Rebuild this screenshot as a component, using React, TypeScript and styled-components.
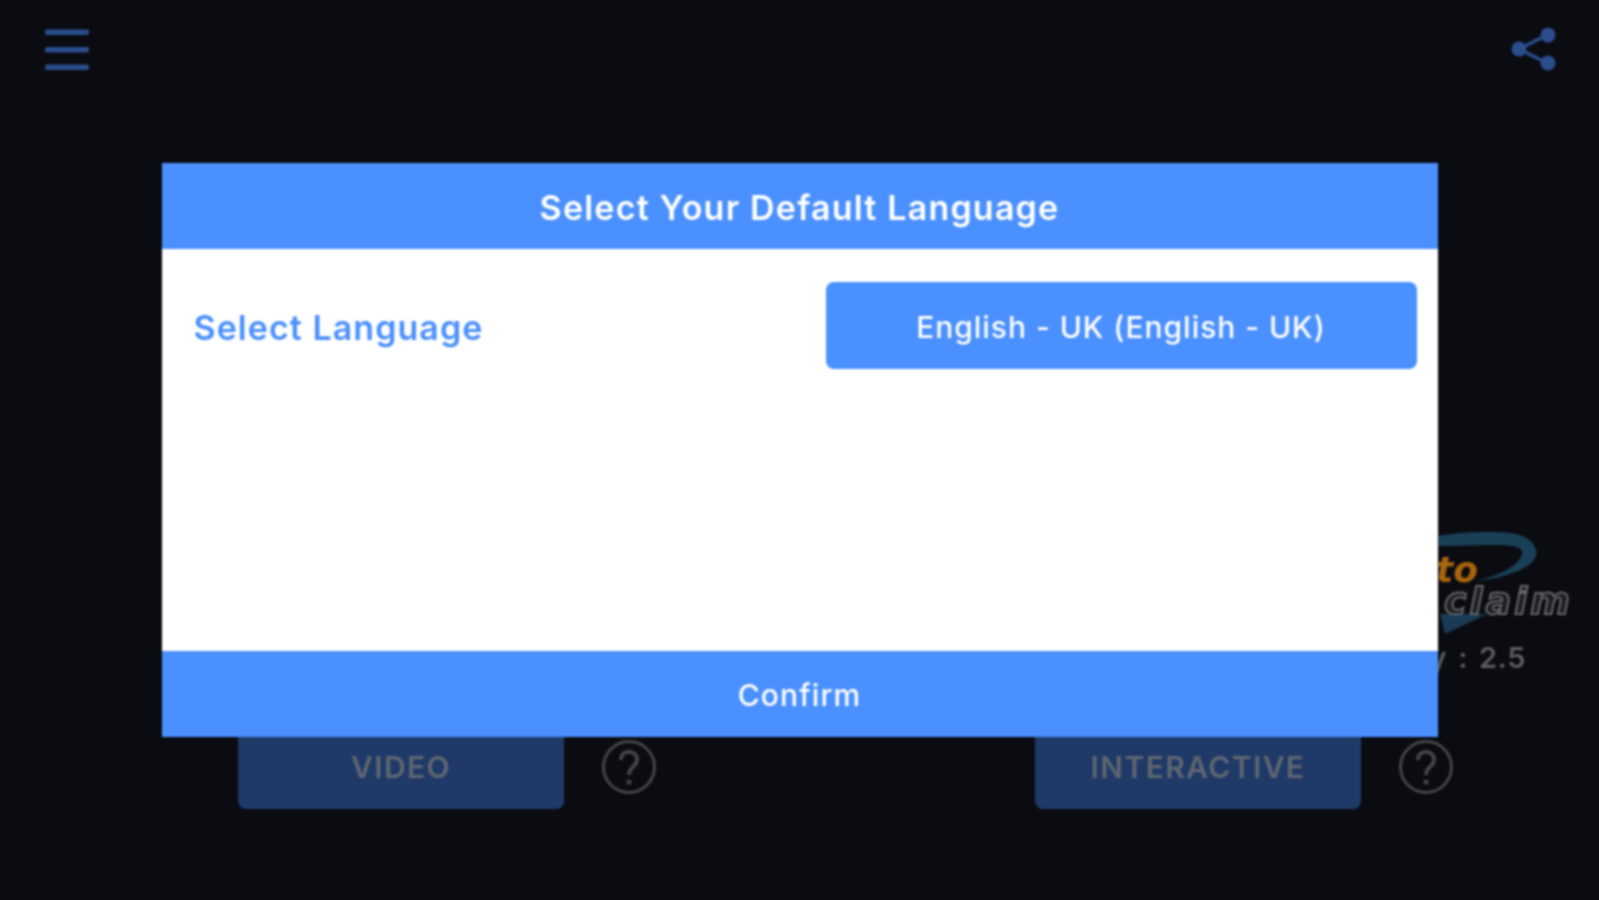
import React from 'react';
import styled, { createGlobalStyle } from 'styled-components';

const GlobalStyle = createGlobalStyle`
  html, body {
    margin: 0;
    padding: 0;
    background: #0a0c12;
    overflow: hidden;
  }
  * {
    box-sizing: border-box;
  }
`;

const App: React.FC = () => {
  return (
    <>
      <GlobalStyle />
      <Page>
        <TopBar>
          <svg width="44" height="46" viewBox="0 0 44 46">
            <rect x="0" y="1.5" width="44" height="5.5" rx="2" fill="#2a4d8c" />
            <rect x="0" y="19" width="44" height="5.5" rx="2" fill="#2a4d8c" />
            <rect x="0" y="36.5" width="44" height="5.5" rx="2" fill="#2a4d8c" />
          </svg>
          <svg width="46" height="46" viewBox="0 0 46 46">
            <path d="M9 21 L37 7 M9 21 L37 35" stroke="#2a4d8c" strokeWidth="3.5" />
            <circle cx="9" cy="21" r="7.5" fill="#2a4d8c" />
            <circle cx="38" cy="7" r="7.5" fill="#2a4d8c" />
            <circle cx="38" cy="35" r="7.5" fill="#2a4d8c" />
          </svg>
        </TopBar>
        <Content>
          <Logo>
            <svg width="170" height="115" viewBox="0 0 170 115">
              <path
                d="M8 10 C30 6 60 5 80 7 C100 9 110 22 105 32 C98 45 70 52 47 55 C65 50 88 42 92 28 C94 20 80 19 65 19 C45 19 25 20 8 20 Z"
                fill="#1a4058"
              />
              <path d="M10 88 L57 88 L15 108 Z" fill="#1a3a55" />
              <OrangeText x="6" y="56">to</OrangeText>
              <GreyText x="14" y="88">claim</GreyText>
            </svg>
          </Logo>
          <VersionText>y : 2.5</VersionText>
          <ModeRow>
            <ModeGroup>
              <ModeButton>VIDEO</ModeButton>
              <HelpIcon />
            </ModeGroup>
            <ModeGroup>
              <ModeButton>INTERACTIVE</ModeButton>
              <HelpIcon />
            </ModeGroup>
          </ModeRow>
        </Content>
      </Page>
      <Overlay>
        <Modal>
          <ModalHeader>Select Your Default Language</ModalHeader>
          <ModalBody>
            <Label>Select Language</Label>
            <LanguageButton>English - UK (English - UK)</LanguageButton>
          </ModalBody>
          <ModalFooter>Confirm</ModalFooter>
        </Modal>
      </Overlay>
    </>
  );
};

const HelpIcon: React.FC = () => (
  <svg width="56" height="56" viewBox="0 0 56 56">
    <circle cx="28" cy="28" r="25.5" fill="none" stroke="#454545" strokeWidth="3" />
    <path
      d="M20 21 C20 10 36 10 36 21 C36 28 28 27 28 36"
      fill="none"
      stroke="#454545"
      strokeWidth="4"
    />
    <circle cx="28" cy="43" r="2.6" fill="#454545" />
  </svg>
);

const Page = styled.div`
  display: flex;
  flex-direction: column;
  width: 1599px;
  height: 900px;
  background: #0a0c12;
  font-family: Inter, 'Liberation Sans', sans-serif;
  filter: blur(1px);
`;

const TopBar = styled.div`
  display: flex;
  justify-content: space-between;
  align-items: flex-start;
  padding: 28px 43px 0 45px;
  height: 98px;
`;

const Content = styled.div`
  flex: 1;
  display: flex;
  flex-direction: column;
  justify-content: flex-end;
  padding-bottom: 91px;
`;

const Logo = styled.div`
  align-self: flex-end;
  width: 169px;
  height: 115px;
  overflow: hidden;
`;

const OrangeText = styled.text`
  font-family: 'DejaVu Sans', sans-serif;
  font-size: 36px;
  font-weight: 700;
  font-style: italic;
  fill: #a8650e;
`;

const GreyText = styled.text`
  font-family: 'DejaVu Sans', sans-serif;
  font-size: 38px;
  font-weight: 700;
  font-style: italic;
  letter-spacing: 3px;
  fill: #1c1e23;
  stroke: #666666;
  stroke-width: 2px;
`;

const VersionText = styled.div`
  align-self: flex-end;
  margin: 0 73px 50px 0;
  font-size: 29px;
  line-height: 34px;
  font-weight: 600;
  letter-spacing: 0.6px;
  word-spacing: 3px;
  color: #5c5c5c;
`;

const ModeRow = styled.div`
  display: grid;
  grid-template-columns: 797px 1fr;
  padding-left: 238px;
`;

const ModeGroup = styled.div`
  display: flex;
  align-items: center;
  gap: 37px;
`;

const ModeButton = styled.div`
  display: flex;
  align-items: center;
  justify-content: center;
  width: 326px;
  height: 84px;
  border-radius: 8px;
  background: #1f3a68;
  color: #5f6670;
  font-size: 30px;
  font-weight: 600;
  letter-spacing: 1.4px;
`;

const Overlay = styled.div`
  position: fixed;
  inset: 0;
  display: flex;
  align-items: center;
  justify-content: center;
  font-family: Inter, 'Liberation Sans', sans-serif;
  filter: blur(1px);
`;

const Modal = styled.div`
  display: flex;
  flex-direction: column;
  width: 1276px;
  height: 574px;
  background: #ffffff;
`;

const ModalHeader = styled.div`
  display: flex;
  align-items: center;
  justify-content: center;
  height: 86px;
  padding-top: 3px;
  background: #4a90fe;
  color: #ffffff;
  font-size: 34px;
  font-weight: 600;
  letter-spacing: 1.2px;
`;

const ModalBody = styled.div`
  flex: 1;
  display: flex;
  align-items: flex-start;
  justify-content: space-between;
  padding: 33px 21px 0 32px;
`;

const Label = styled.div`
  height: 87px;
  line-height: 91px;
  color: #4a90fe;
  font-size: 34px;
  font-weight: 600;
  letter-spacing: 1.05px;
`;

const LanguageButton = styled.div`
  display: flex;
  align-items: center;
  justify-content: center;
  width: 591px;
  height: 87px;
  padding-top: 2px;
  border-radius: 8px;
  background: #4a90fe;
  color: #ffffff;
  font-size: 30px;
  font-weight: 500;
  letter-spacing: 0.95px;
`;

const ModalFooter = styled.div`
  display: flex;
  align-items: center;
  justify-content: center;
  height: 86px;
  padding-top: 2px;
  background: #4a90fe;
  color: #ffffff;
  font-size: 30px;
  font-weight: 500;
  letter-spacing: 1.1px;
`;

export default App;
